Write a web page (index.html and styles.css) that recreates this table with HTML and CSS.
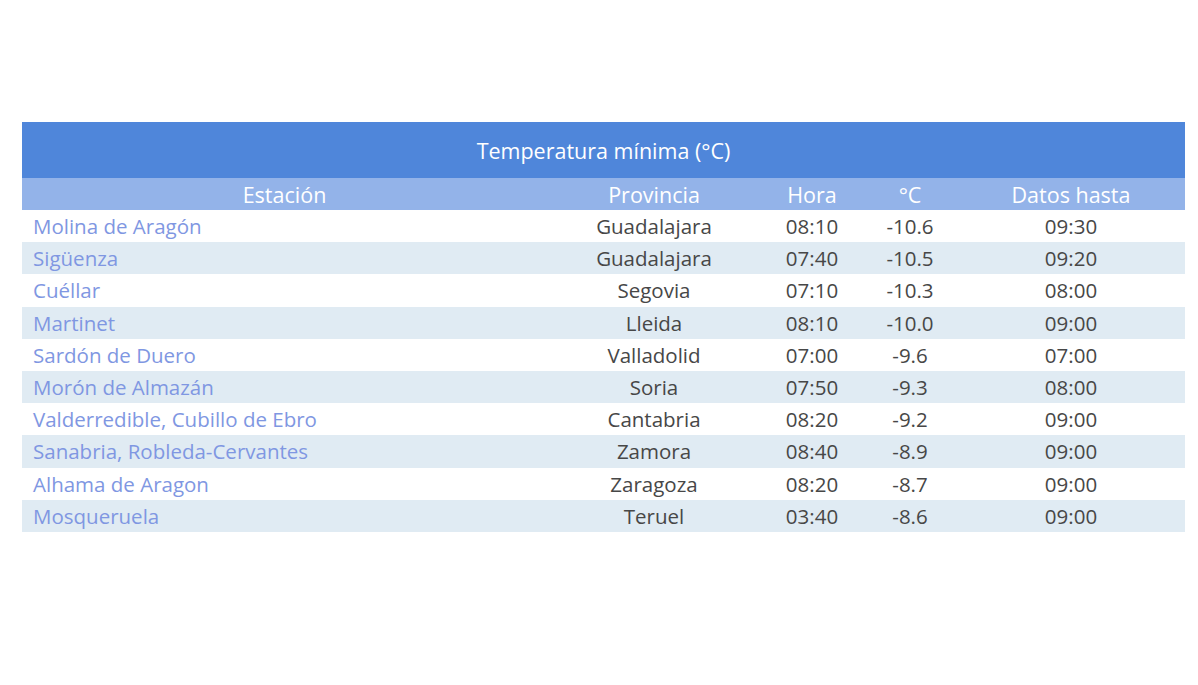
FILE: index.html
```html
<!DOCTYPE html>
<html lang="es">
<head>
<meta charset="utf-8">
<link rel="stylesheet" href="styles.css">
</head>
<body>
<div class="page">
<table class="tabla">
<colgroup>
<col class="c-est"><col class="c-prov"><col class="c-hora"><col class="c-temp"><col class="c-datos">
</colgroup>
<thead>
<tr class="titulo"><th colspan="5">Temperatura mínima (°C)</th></tr>
<tr class="cab"><th>Estación</th><th>Provincia</th><th>Hora</th><th>°C</th><th>Datos hasta</th></tr>
</thead>
<tbody>
<tr><td class="est"><a href="#">Molina de Aragón</a></td><td>Guadalajara</td><td>08:10</td><td>-10.6</td><td>09:30</td></tr>
<tr><td class="est"><a href="#">Sigüenza</a></td><td>Guadalajara</td><td>07:40</td><td>-10.5</td><td>09:20</td></tr>
<tr><td class="est"><a href="#">Cuéllar</a></td><td>Segovia</td><td>07:10</td><td>-10.3</td><td>08:00</td></tr>
<tr><td class="est"><a href="#">Martinet</a></td><td>Lleida</td><td>08:10</td><td>-10.0</td><td>09:00</td></tr>
<tr><td class="est"><a href="#">Sardón de Duero</a></td><td>Valladolid</td><td>07:00</td><td>-9.6</td><td>07:00</td></tr>
<tr><td class="est"><a href="#">Morón de Almazán</a></td><td>Soria</td><td>07:50</td><td>-9.3</td><td>08:00</td></tr>
<tr><td class="est"><a href="#">Valderredible, Cubillo de Ebro</a></td><td>Cantabria</td><td>08:20</td><td>-9.2</td><td>09:00</td></tr>
<tr><td class="est"><a href="#">Sanabria, Robleda-Cervantes</a></td><td>Zamora</td><td>08:40</td><td>-8.9</td><td>09:00</td></tr>
<tr><td class="est"><a href="#">Alhama de Aragon</a></td><td>Zaragoza</td><td>08:20</td><td>-8.7</td><td>09:00</td></tr>
<tr><td class="est"><a href="#">Mosqueruela</a></td><td>Teruel</td><td>03:40</td><td>-8.6</td><td>09:00</td></tr>
</tbody>
</table>
</div>
</body>
</html>
```
FILE: styles.css
```css
html, body {
  margin: 0;
  padding: 0;
  background: #ffffff;
}
body {
  font-family: "Open Sans", "Noto Sans", sans-serif;
  color: #444444;
}
.page {
  padding: 122px 13px 0 22px;
}
.tabla {
  width: 1163px;
  border-collapse: collapse;
  table-layout: fixed;
  font-size: 20.5px;
}
.c-est { width: 525px; }
.c-prov { width: 214px; }
.c-hora { width: 102px; }
.c-temp { width: 94px; }
.c-datos { width: 228px; }
.tabla th, .tabla td {
  padding: 0;
  text-align: center;
  font-weight: normal;
  white-space: nowrap;
  overflow: hidden;
}
.titulo th {
  background: #4f86da;
  color: #ffffff;
  height: 56px;
  font-size: 21.5px;
}
.cab th {
  background: #93b3e9;
  color: #ffffff;
  height: 32px;
  font-size: 21.5px;
}
.tabla tbody td {
  height: 32.2px;
  color: #474747;
}
.tabla tbody tr:nth-child(even) td {
  background: #e0ebf3;
}
.tabla td.est {
  text-align: left;
  padding-left: 11px;
}
.est a {
  color: #7f97e2;
  text-decoration: none;
}
```
